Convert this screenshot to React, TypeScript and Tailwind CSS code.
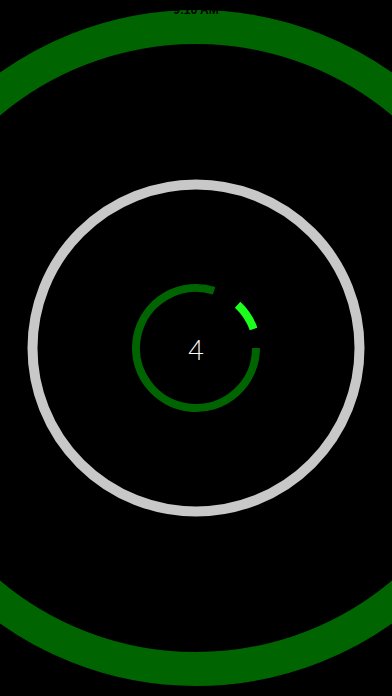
import React from "react";

export default function App() {
  return (
    <div className="relative w-[392px] h-[696px] bg-black overflow-hidden">
      <svg
        className="absolute inset-0"
        width="392"
        height="696"
        viewBox="0 0 392 696"
        fill="none"
      >
        <circle cx="196" cy="348" r="321" stroke="#006400" strokeWidth="34" />
        <circle cx="196" cy="348" r="163.5" stroke="#c8c8c8" strokeWidth="10" />
        <path
          d="M 256 348 A 60 60 0 1 1 214.1 290.8"
          stroke="#006400"
          strokeWidth="8"
        />
        <path
          d="M 237.6 304.8 A 61 61 0 0 1 253.6 329"
          stroke="#1cff1c"
          strokeWidth="8"
        />
      </svg>
      <div className="relative flex justify-center pt-[3px]">
        <span className="text-[12px] leading-[14px] font-bold text-black font-['Liberation_Sans',sans-serif]">
          9:16 AM
        </span>
      </div>
      <div className="absolute inset-0 flex items-center justify-center">
        <span className="text-[27px] leading-none font-light text-white font-['Lato','Open_Sans',sans-serif] pt-[2px]">
          4
        </span>
      </div>
    </div>
  );
}
